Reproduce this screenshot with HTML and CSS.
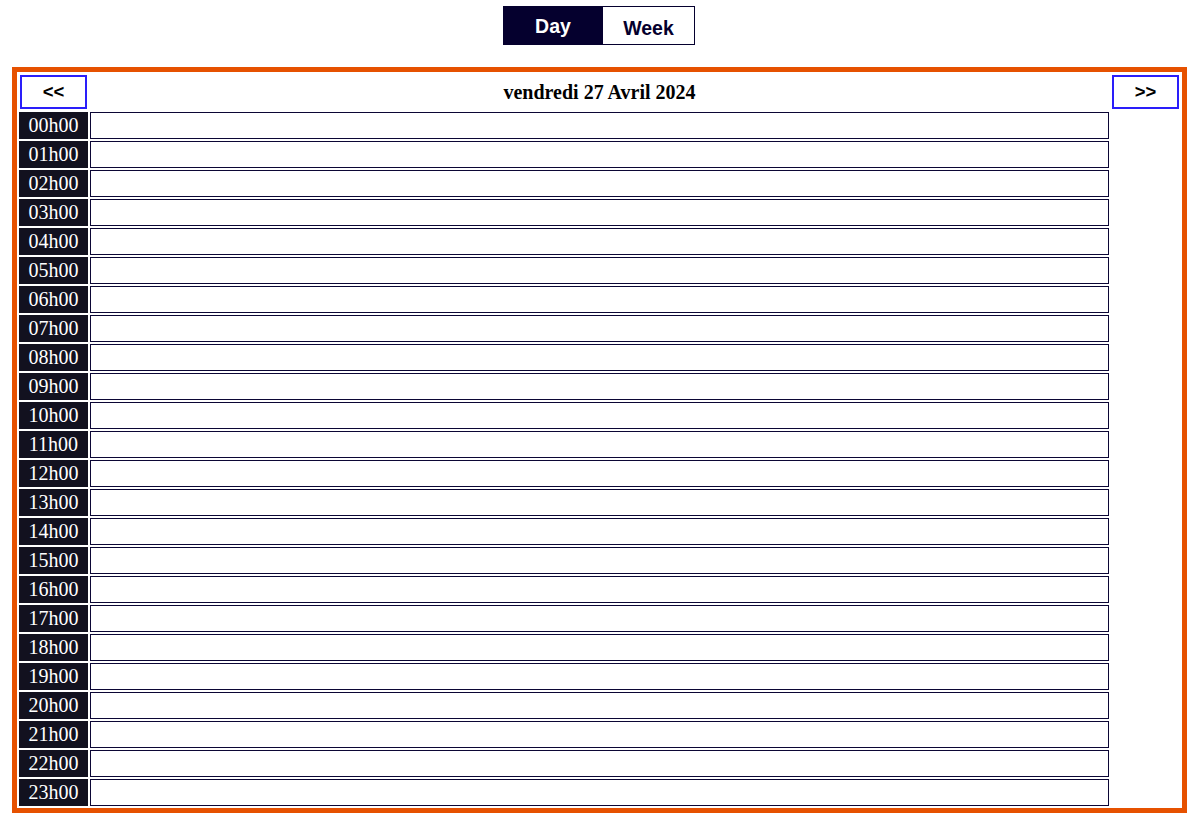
FILE: index.html
```html
<!DOCTYPE html>
<html lang="fr">
<head>
<meta charset="utf-8">
<title>Agenda</title>
<link rel="stylesheet" href="styles.css">
</head>
<body>
<div class="toggle">
  <button class="mode mode-active">Day</button>
  <button class="mode mode-week">Week</button>
</div>
<div class="agenda">
  <div class="cell"><button class="nav">&lt;&lt;</button></div>
  <div class="title">vendredi 27 Avril 2024</div>
  <div class="cell"><button class="nav">&gt;&gt;</button></div>

  <div class="hour">00h00</div><div class="slot"></div><div class="empty"></div>
  <div class="hour">01h00</div><div class="slot"></div><div class="empty"></div>
  <div class="hour">02h00</div><div class="slot"></div><div class="empty"></div>
  <div class="hour">03h00</div><div class="slot"></div><div class="empty"></div>
  <div class="hour">04h00</div><div class="slot"></div><div class="empty"></div>
  <div class="hour">05h00</div><div class="slot"></div><div class="empty"></div>
  <div class="hour">06h00</div><div class="slot"></div><div class="empty"></div>
  <div class="hour">07h00</div><div class="slot"></div><div class="empty"></div>
  <div class="hour">08h00</div><div class="slot"></div><div class="empty"></div>
  <div class="hour">09h00</div><div class="slot"></div><div class="empty"></div>
  <div class="hour">10h00</div><div class="slot"></div><div class="empty"></div>
  <div class="hour">11h00</div><div class="slot"></div><div class="empty"></div>
  <div class="hour">12h00</div><div class="slot"></div><div class="empty"></div>
  <div class="hour">13h00</div><div class="slot"></div><div class="empty"></div>
  <div class="hour">14h00</div><div class="slot"></div><div class="empty"></div>
  <div class="hour">15h00</div><div class="slot"></div><div class="empty"></div>
  <div class="hour">16h00</div><div class="slot"></div><div class="empty"></div>
  <div class="hour">17h00</div><div class="slot"></div><div class="empty"></div>
  <div class="hour">18h00</div><div class="slot"></div><div class="empty"></div>
  <div class="hour">19h00</div><div class="slot"></div><div class="empty"></div>
  <div class="hour">20h00</div><div class="slot"></div><div class="empty"></div>
  <div class="hour">21h00</div><div class="slot"></div><div class="empty"></div>
  <div class="hour">22h00</div><div class="slot"></div><div class="empty"></div>
  <div class="hour">23h00</div><div class="slot"></div><div class="empty"></div>
</div>
</body>
</html>
```
FILE: styles.css
```css
html, body {
  margin: 0;
  padding: 0;
  background: #ffffff;
}

body {
  font-family: "Liberation Serif", "Times New Roman", serif;
  color: #000;
}

.toggle {
  display: flex;
  justify-content: center;
  padding-top: 6px;
  margin-left: 1px;
}

.mode {
  box-sizing: border-box;
  height: 39px;
  margin: 0;
  font-family: "Liberation Sans", Arial, sans-serif;
  font-weight: bold;
  font-size: 19.5px;
  cursor: pointer;
}

.mode-active {
  width: 100px;
  background: #05002e;
  color: #ffffff;
  border: none;
  padding: 1px 0 0 0;
}

.mode-week {
  width: 92px;
  background: #ffffff;
  color: #05002e;
  border: 1px solid #05002e;
  border-left: none;
  padding: 5px 0 0 0;
}

.agenda {
  box-sizing: border-box;
  margin: 22px 10px 0 12px;
  width: 1175px;
  border: 5px solid #e65100;
  padding: 2px;
  display: grid;
  grid-template-columns: 69px 1019px 68px;
  grid-template-rows: 36px repeat(24, 27px);
  gap: 2px;
}

.cell {
  display: flex;
  align-items: center;
}

.nav {
  box-sizing: border-box;
  width: 67px;
  height: 34px;
  margin: 0 0 0 1px;
  background: #ffffff;
  border: 2px solid #2a1efa;
  font-family: "Liberation Sans", Arial, sans-serif;
  font-weight: bold;
  font-size: 18.5px;
  color: #000;
  padding: 0;
  cursor: pointer;
}

.title {
  display: flex;
  align-items: center;
  justify-content: center;
  font-weight: bold;
  font-size: 20px;
}

.hour {
  background: #12111f;
  color: #ffffff;
  font-size: 20px;
  display: flex;
  align-items: center;
  justify-content: center;
}

.slot {
  box-sizing: border-box;
  border: 1px solid #0b0635;
  background: #ffffff;
}
```
